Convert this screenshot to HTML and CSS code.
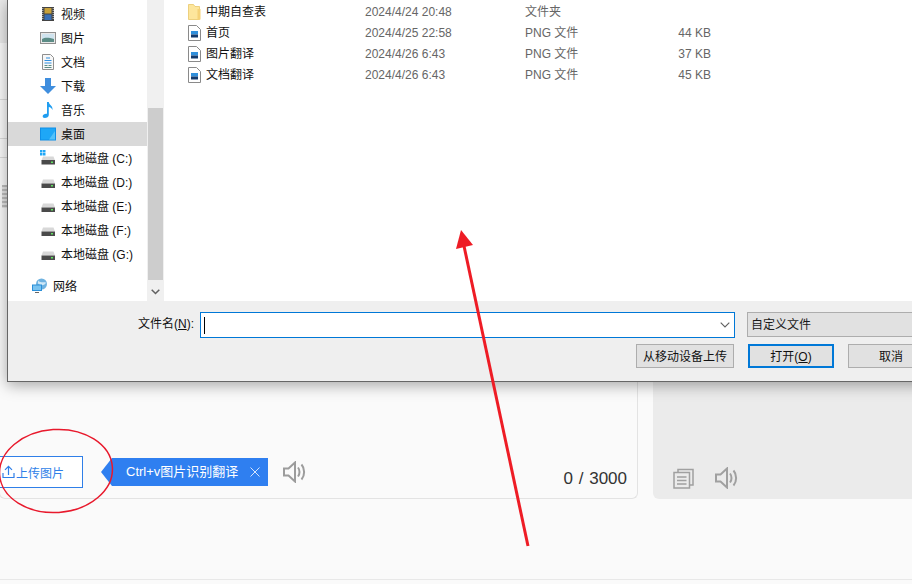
FILE: index.html
```html
<!DOCTYPE html>
<html lang="zh-CN">
<head>
    <meta charset="UTF-8">
    <meta name="viewport" content="width=device-width, initial-scale=1.0">
    <title>上传图片</title>
    <link rel="stylesheet" href="styles.css">
</head>
<body>
    <div class="page">
        <div class="workspace">
            <div class="input-card">
                <div class="top-band"></div>
                <div class="nav-line nav-line-1"></div>
                <div class="nav-line nav-line-2"></div>
                <div class="nav-line nav-line-3"></div>
                <div class="blur-title"></div>
                <div class="card-tools">
                    <button class="upload-btn">
                        <svg class="upload-icon" width="13" height="14" viewBox="0 0 13 14"><path d="M6.500 10V1.500M3 4.800 6.500 1.300 10 4.800M1 8v4.500h11V8" fill="none" stroke="#2f7fe8" stroke-width="1.200"/></svg>
                        上传图片
                    </button>
                    <div class="tip">
                        <span>Ctrl+v图片识别翻译</span>
                        <svg width="10" height="10" viewBox="0 0 10 10"><path d="M.5.5l9 9M9.500.5l-9 9" stroke="#d5e5fc" stroke-width="1" fill="none"/></svg>
                    </div>
                    <svg class="speaker" width="23" height="22" viewBox="0 0 23 22"><path d="M1 7.500h4.500L12 1.500v19l-6.500-6H1zM15 6.500c2 2.500 2 6.500 0 9M18.500 3.500c3.500 4 3.500 11 0 15" fill="none" stroke="#9c9c9c" stroke-width="2"/></svg>
                    <div class="counter">0 / 3000</div>
                </div>
            </div>
            <div class="result-card">
                <svg width="21" height="21" viewBox="0 0 21 21"><path d="M5 4V1.500h15V17h-3" fill="none" stroke="#a0a0a0" stroke-width="1.500"/><path d="M1 4.500h15.500V20H1zM4 9h9.500M4 12.500h9.500M4 16h9.500" fill="none" stroke="#a0a0a0" stroke-width="1.500"/></svg>
                <svg class="speaker" width="23" height="22" viewBox="0 0 23 22"><path d="M1 7.500h4.500L12 1.500v19l-6.500-6H1zM15 6.500c2 2.500 2 6.500 0 9M18.500 3.500c3.500 4 3.500 11 0 15" fill="none" stroke="#a0a0a0" stroke-width="2"/></svg>
            </div>
        </div>
        <div class="page-foot"></div>
    </div>

    <!-- file dialog sits over the page -->
    <div class="dialog">
        <div class="browser">
            <div class="sidebar">
                <div class="place">
                    <svg width="16" height="16" viewBox="0 0 16 16"><rect x="2" y="1" width="12" height="14" fill="#444"/><rect x="4.500" y="2" width="7" height="5.500" fill="#c9a23a"/><rect x="4.500" y="8.500" width="7" height="5.500" fill="#3a6fb5"/><path d="M2.800 2v12M13.200 2v12" stroke="#ddd" stroke-dasharray="1 1" fill="none"/></svg>
                    <span>视频</span>
                </div>
                <div class="place">
                    <svg width="16" height="16" viewBox="0 0 16 16"><rect x=".5" y="2.500" width="15" height="11" fill="#e8e8e8" stroke="#8f8f8f"/><rect x="2" y="4" width="12" height="8" fill="#cfe3ee"/><path d="M2 9c3-2 7-1.500 12 0v3H2z" fill="#5c8c86"/></svg>
                    <span>图片</span>
                </div>
                <div class="place">
                    <svg width="16" height="16" viewBox="0 0 16 16"><path d="M2.500.500h8l3 3v12h-11z" fill="#f7f7f7" stroke="#8f8f8f"/><path d="M6 4h4M4.500 6.500h7M4.500 9h7" stroke="#2f8fe0" fill="none"/><path d="M4.500 11.500h3M8.500 11.500h3M4.500 13.500h7" stroke="#5c8c86" fill="none"/></svg>
                    <span>文档</span>
                </div>
                <div class="place">
                    <svg width="16" height="16" viewBox="0 0 16 16"><path d="M5 0h6v8h5l-8 8-8-8h5z" fill="#3f8ede"/></svg>
                    <span>下载</span>
                </div>
                <div class="place">
                    <svg width="16" height="16" viewBox="0 0 16 16"><path d="M7 0h1.800c.3 3 4.200 3.500 3.700 8-.8-2-2.400-2.800-3.700-3v8c0 2-2 3-4 3-1.500 0-2.300-1-2.100-2 .3-1.700 2.500-2.700 4.300-2.200z" fill="#1f9df0"/></svg>
                    <span>音乐</span>
                </div>
                <div class="place place-active">
                    <svg width="16" height="16" viewBox="0 0 16 16"><rect y="1.500" width="16" height="13" fill="#0f8fe8"/><path d="M1 2.500h14v11H1z" fill="#1ea7f7"/><path d="M9 13.500 15 5v8.500z" fill="#53c2fa"/></svg>
                    <span>桌面</span>
                </div>
                <div class="place">
                    <svg width="16" height="16" viewBox="0 0 16 16"><path d="M0 0h2.500v2.500H0zM3 0h2.500v2.500H3zM0 3h2.500v2.500H0zM3 3h2.500v2.500H3z" fill="#1ea7f7"/><path d="M3 6.500h10.500l1.500 4H1.500z" fill="#d8d8d8"/><rect x="1.500" y="10" width="13.500" height="4.500" fill="#4a4a4a"/><rect x="11" y="11.500" width="2" height="1.500" fill="#5fe05f"/></svg>
                    <span>本地磁盘 (C:)</span>
                </div>
                <div class="place">
                    <svg width="16" height="16" viewBox="0 0 16 16"><path d="M3 5.500h10.500l1.500 4H1.500z" fill="#d8d8d8"/><rect x="1.500" y="9.500" width="13.500" height="4.500" fill="#4a4a4a"/><rect x="11" y="11" width="2" height="1.500" fill="#5fe05f"/></svg>
                    <span>本地磁盘 (D:)</span>
                </div>
                <div class="place">
                    <svg width="16" height="16" viewBox="0 0 16 16"><path d="M3 5.500h10.500l1.500 4H1.500z" fill="#d8d8d8"/><rect x="1.500" y="9.500" width="13.500" height="4.500" fill="#4a4a4a"/><rect x="11" y="11" width="2" height="1.500" fill="#5fe05f"/></svg>
                    <span>本地磁盘 (E:)</span>
                </div>
                <div class="place">
                    <svg width="16" height="16" viewBox="0 0 16 16"><path d="M3 5.500h10.500l1.500 4H1.500z" fill="#d8d8d8"/><rect x="1.500" y="9.500" width="13.500" height="4.500" fill="#4a4a4a"/><rect x="11" y="11" width="2" height="1.500" fill="#5fe05f"/></svg>
                    <span>本地磁盘 (F:)</span>
                </div>
                <div class="place">
                    <svg width="16" height="16" viewBox="0 0 16 16"><path d="M3 5.500h10.500l1.500 4H1.500z" fill="#d8d8d8"/><rect x="1.500" y="9.500" width="13.500" height="4.500" fill="#4a4a4a"/><rect x="11" y="11" width="2" height="1.500" fill="#5fe05f"/></svg>
                    <span>本地磁盘 (G:)</span>
                </div>
                <div class="place place-network">
                    <svg width="16" height="16" viewBox="0 0 16 16"><circle cx="9.500" cy="6" r="5.500" fill="#6fb2e0"/><path d="M6 2.500c2 2.500 5 1.500 8 2-1 3-5 4-8 1z" fill="#cfe8f7"/><rect y="6.500" width="10" height="6.500" fill="#2b8fd8"/><rect x="1" y="7.500" width="8" height="4.500" fill="#79c3f0"/><path d="M3 14.500h4" stroke="#666" fill="none"/></svg>
                    <span>网络</span>
                </div>
            </div>
            <div class="scrollbar">
                <div class="thumb"></div>
                <svg class="scroll-down" width="9" height="6" viewBox="0 0 9 6"><path d="M.7.700 4.500 4.500 8.300.700" fill="none" stroke="#606060" stroke-width="1.500"/></svg>
            </div>
            <div class="files">
                <div class="file">
                    <svg width="13" height="16" viewBox="0 0 13 16"><path d="M.5.500h5L7 2.500h4.500v13H.5z" fill="#fde69c" stroke="#e8c76a" stroke-width=".8"/><rect x="9.500" y="5" width="3" height="10.500" fill="#f5d277"/></svg>
                    <span class="fname">中期自查表</span>
                    <span class="fmeta">2024/4/24 20:48</span>
                    <span class="fmeta ftype">文件夹</span>
                    <span class="fsize"></span>
                </div>
                <div class="file">
                    <svg width="13" height="16" viewBox="0 0 13 16"><path d="M.5.500h8l4 4v11H.5z" fill="#fff" stroke="#8a8a8a"/><rect x="3" y="6" width="7" height="3.500" fill="#2f8fdc"/><rect x="3" y="9.500" width="7" height="3" fill="#123a6e"/></svg>
                    <span class="fname">首页</span>
                    <span class="fmeta">2024/4/25 22:58</span>
                    <span class="fmeta ftype">PNG 文件</span>
                    <span class="fsize">44 KB</span>
                </div>
                <div class="file">
                    <svg width="13" height="16" viewBox="0 0 13 16"><path d="M.5.500h8l4 4v11H.5z" fill="#fff" stroke="#8a8a8a"/><rect x="3" y="6" width="7" height="3.500" fill="#2f8fdc"/><rect x="3" y="9.500" width="7" height="3" fill="#123a6e"/></svg>
                    <span class="fname">图片翻译</span>
                    <span class="fmeta">2024/4/26 6:43</span>
                    <span class="fmeta ftype">PNG 文件</span>
                    <span class="fsize">37 KB</span>
                </div>
                <div class="file">
                    <svg width="13" height="16" viewBox="0 0 13 16"><path d="M.5.500h8l4 4v11H.5z" fill="#fff" stroke="#8a8a8a"/><rect x="3" y="6" width="7" height="3.500" fill="#2f8fdc"/><rect x="3" y="9.500" width="7" height="3" fill="#123a6e"/></svg>
                    <span class="fname">文档翻译</span>
                    <span class="fmeta">2024/4/26 6:43</span>
                    <span class="fmeta ftype">PNG 文件</span>
                    <span class="fsize">45 KB</span>
                </div>
            </div>
        </div>
        <div class="dialog-foot">
            <div class="foot-row">
                <label class="name-label">文件名(<u>N</u>):</label>
                <div class="name-input">
                    <span class="caret"></span>
                    <svg width="10" height="6" viewBox="0 0 10 6"><path d="M.7.700 5 5 9.300.700" fill="none" stroke="#606060" stroke-width="1.100"/></svg>
                </div>
                <div class="type-select">自定义文件</div>
            </div>
            <div class="foot-row foot-actions">
                <button class="dlg-btn btn-mobile">从移动设备上传</button>
                <button class="dlg-btn btn-open">打开(<u>O</u>)</button>
                <button class="dlg-btn">取消</button>
            </div>
        </div>
    </div>

    <!-- red marks drawn on top of the screenshot -->
    <svg class="marks" width="912" height="584" viewBox="0 0 912 584">
        <ellipse cx="56" cy="471" rx="56.500" ry="41.500" fill="none" stroke="#e8192c" stroke-width="1.500" transform="rotate(-4 56 471)"/>
        <path d="M528 546 464 246" fill="none" stroke="#ee1c25" stroke-width="3"/>
        <path d="M461 230 473 245 456 249z" fill="#ee1c25"/>
    </svg>
</body>
</html>
```

FILE: styles.css
```css
html, body {
    margin: 0;
    height: 584px;
    overflow: hidden;
    background-color: #fafafa;
    font-family: "Liberation Sans", "Noto Sans CJK SC", sans-serif;
    color: #1a1a1a;
}
button {
    font-family: inherit;
}
svg {
    flex-shrink: 0;
}
.page {
    width: 912px;
    height: 584px;
    overflow: hidden;
    position: relative;
}
.workspace {
    display: flex;
    gap: 15px;
    height: 499px;
    margin-left: -1px;
}
.input-card {
    width: 639px;
    box-sizing: border-box;
    border: 1px solid #e3e3e3;
    border-top: none;
    border-radius: 0 0 6px 6px;
    position: relative;
    display: flex;
    flex-direction: column;
    justify-content: flex-end;
    overflow: hidden;
}
.top-band {
    position: absolute;
    left: 0;
    top: 0;
    width: 100%;
    height: 43px;
    background-color: #eaeaea;
}
.nav-line {
    position: absolute;
    left: 0;
    width: 100%;
    height: 1px;
    background-color: #dcdcdc;
}
.nav-line-1 { top: 99px; }
.nav-line-2 { top: 138px; }
.nav-line-3 { top: 157px; }
.blur-title {
    position: absolute;
    left: 2px;
    top: 185px;
    width: 6px;
    height: 23px;
    background: repeating-linear-gradient(#bdbdbd 0 2px, #e4e4e4 2px 4px);
}
.card-tools {
    display: flex;
    align-items: center;
    height: 32px;
    padding: 0 10px 10px 0;
}
.upload-btn {
    width: 84px;
    height: 32px;
    margin-left: -1px;
    padding: 0 0 0 2px;
    display: flex;
    align-items: center;
    gap: 1px;
    background: #fff;
    border: 1px solid #2f7fe8;
    color: #2f7fe8;
    font-size: 12px;
}
.tip {
    margin-left: 29px;
    width: 156px;
    height: 28px;
    padding-left: 14px;
    box-sizing: border-box;
    display: flex;
    align-items: center;
    background-color: #2f7ff0;
    color: #fff;
    font-size: 13px;
    position: relative;
}
.tip span {
    margin-top: -3px;
}
.tip::before {
    content: "";
    position: absolute;
    left: -11px;
    top: 0;
    border-style: solid;
    border-width: 14px 11px 14px 0;
    border-color: transparent #2f7ff0 transparent transparent;
}
.tip svg {
    margin-left: 12px;
}
.speaker {
    margin-left: 15px;
}
.counter {
    margin-left: auto;
    font-size: 17px;
    word-spacing: 1px;
    color: #333;
    align-self: flex-end;
    line-height: 22px;
    margin-bottom: -2px;
}
.result-card {
    flex: 1;
    box-sizing: border-box;
    height: 499px;
    padding-bottom: 10px;
    padding-left: 20px;
    background-color: #ebebeb;
    border-radius: 0 0 0 6px;
    display: flex;
    align-items: flex-end;
    gap: 21px;
}
.result-card .speaker {
    margin-left: 0;
}
.page-foot {
    margin-top: 80px;
    border-top: 1px solid #e8e8e8;
}

.dialog {
    position: absolute;
    left: 7px;
    top: 0;
    width: 1000px;
    height: 382px;
    box-sizing: border-box;
    border-left: 1px solid #666;
    border-bottom: 1px solid #666;
    background-color: #efefef;
    box-shadow: 0 3px 14px rgba(0, 0, 0, 0.35);
}
.browser {
    display: flex;
    height: 301px;
    background-color: #fff;
}
.sidebar {
    width: 139px;
    padding-top: 2px;
    box-sizing: border-box;
}
.place {
    display: flex;
    align-items: center;
    gap: 5px;
    height: 24px;
    padding-left: 32px;
    font-size: 12px;
    color: #111;
}
.place span {
    margin-top: -2px;
}
.place-active {
    background-color: #d9d9d9;
}
.place-network {
    margin-top: 8px;
    padding-left: 24px;
}
.scrollbar {
    width: 17px;
    background-color: #f0f0f0;
    position: relative;
}
.thumb {
    position: absolute;
    left: 1px;
    top: 108px;
    width: 15px;
    height: 172px;
    background-color: #cdcdcd;
}
.scroll-down {
    position: absolute;
    left: 4px;
    top: 289px;
}
.files {
    flex: 1;
    padding: 1px 0 0 24px;
}
.file {
    display: grid;
    grid-template-columns: 18px 159px 160px 130px 56px;
    align-items: center;
    height: 21px;
    font-size: 12px;
}
.fname {
    color: #111;
    margin-top: -2px;
}
.fmeta {
    color: #666;
}
.ftype {
    margin-top: -2px;
}
.fsize {
    color: #666;
    text-align: right;
}

.dialog-foot {
    height: 80px;
    box-sizing: border-box;
    padding-top: 11px;
}
.foot-row {
    display: flex;
    align-items: flex-start;
    padding-left: 130px;
}
.name-label {
    width: 62px;
    font-size: 12px;
    line-height: 25px;
    color: #111;
}
.name-input {
    width: 535px;
    height: 26px;
    box-sizing: border-box;
    border: 1px solid #0078d7;
    outline: 0.5px solid #0078d7;
    outline-offset: -1.5px;
    background-color: #fff;
    display: flex;
    align-items: center;
    justify-content: space-between;
    padding: 0 4px 0 3px;
}
.caret {
    width: 1px;
    height: 17px;
    background-color: #000;
}
.type-select {
    width: 200px;
    height: 25px;
    margin-left: 12px;
    box-sizing: border-box;
    border: 1px solid #adadad;
    background-color: #e1e1e1;
    padding-left: 3px;
    font-size: 12px;
    line-height: 25px;
}
.foot-actions {
    margin-top: 6px;
    padding-left: 628px;
    gap: 14px;
}
.dlg-btn {
    width: 86px;
    height: 24px;
    padding: 0 0 2px;
    box-sizing: border-box;
    border: 1px solid #adadad;
    background-color: #e1e1e1;
    color: #111;
    font-size: 12px;
}
.btn-mobile {
    width: 98px;
}
.btn-open {
    border: 2px solid #0078d7;
}
.marks {
    position: absolute;
    left: 0;
    top: 0;
    pointer-events: none;
}
```
